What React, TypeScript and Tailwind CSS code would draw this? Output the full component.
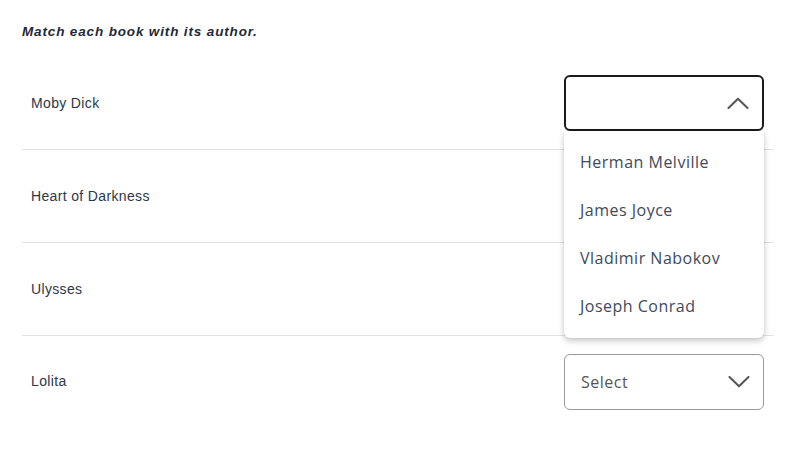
import React from "react";

const Chevron = ({ up }: { up?: boolean }) => (
  <svg width="22" height="12" viewBox="0 0 22 12" fill="none" className="shrink-0">
    {up ? (
      <path d="M1.5 11 L11 1.8 L20.5 11" stroke="#555" strokeWidth="2" strokeLinecap="round" strokeLinejoin="round" />
    ) : (
      <path d="M1.5 1 L11 10.2 L20.5 1" stroke="#555" strokeWidth="2" strokeLinecap="round" strokeLinejoin="round" />
    )}
  </svg>
);

const books = ["Moby Dick", "Heart of Darkness", "Ulysses", "Lolita"];
const authors = ["Herman Melville", "James Joyce", "Vladimir Nabokov", "Joseph Conrad"];

export default function App() {
  return (
    <div className="w-[797px] h-[454px] bg-white overflow-hidden">
      <div className="pl-[22px] pr-[23px] pt-[23px]">
        <p
          className="text-[13.5px] font-bold italic tracking-[0.85px] text-[#1f2937] leading-[18px]"
          style={{ fontFamily: '"Liberation Sans", Arial, sans-serif' }}
        >
          Match each book with its author.
        </p>
        <div className="mt-[16px]">
          {books.map((b, i) => (
            <div
              key={b}
              className={`relative flex items-center justify-between pl-[9px] pr-[10px] ${
                i < books.length - 1 ? "h-[93px] border-b border-[#e2e2e2]" : "h-[91px]"
              }`}
            >
              <span
                className="text-[14px] text-[#2d3748] tracking-[0.35px]"
                style={{ fontFamily: '"Liberation Sans", Arial, sans-serif' }}
              >
                {b}
              </span>
              {i === 0 ? (
                <div className="relative w-[200px]">
                  <div className="h-[56px] rounded-[6px] border-2 border-[#1a1a1a] flex items-center justify-end pr-[13px]">
                    <Chevron up />
                  </div>
                  <div
                    className="absolute left-0 top-[56px] w-[200px] bg-white rounded-b-[6px] shadow-[0_3px_6px_rgba(0,0,0,0.22),0_0_2px_rgba(0,0,0,0.08)] z-10 pt-[7px] pb-[8px]"
                    style={{ fontFamily: '"Open Sans", "Noto Sans", sans-serif' }}
                  >
                    {authors.map((a) => (
                      <div key={a} className="h-[48px] flex items-center pl-[16px] text-[16px] text-[#3f4a5a] tracking-[0.5px]">
                        {a}
                      </div>
                    ))}
                  </div>
                </div>
              ) : i === 3 ? (
                <div className="w-[200px] h-[56px] rounded-[6px] border border-[#9a9a9a] flex items-center justify-between pl-[16px] pr-[13px]">
                  <span
                    className="text-[16px] text-[#555] tracking-[0.5px]"
                    style={{ fontFamily: '"Open Sans", "Noto Sans", sans-serif' }}
                  >
                    Select
                  </span>
                  <Chevron />
                </div>
              ) : (
                <div className="w-[200px] h-[56px]" />
              )}
            </div>
          ))}
        </div>
      </div>
    </div>
  );
}
